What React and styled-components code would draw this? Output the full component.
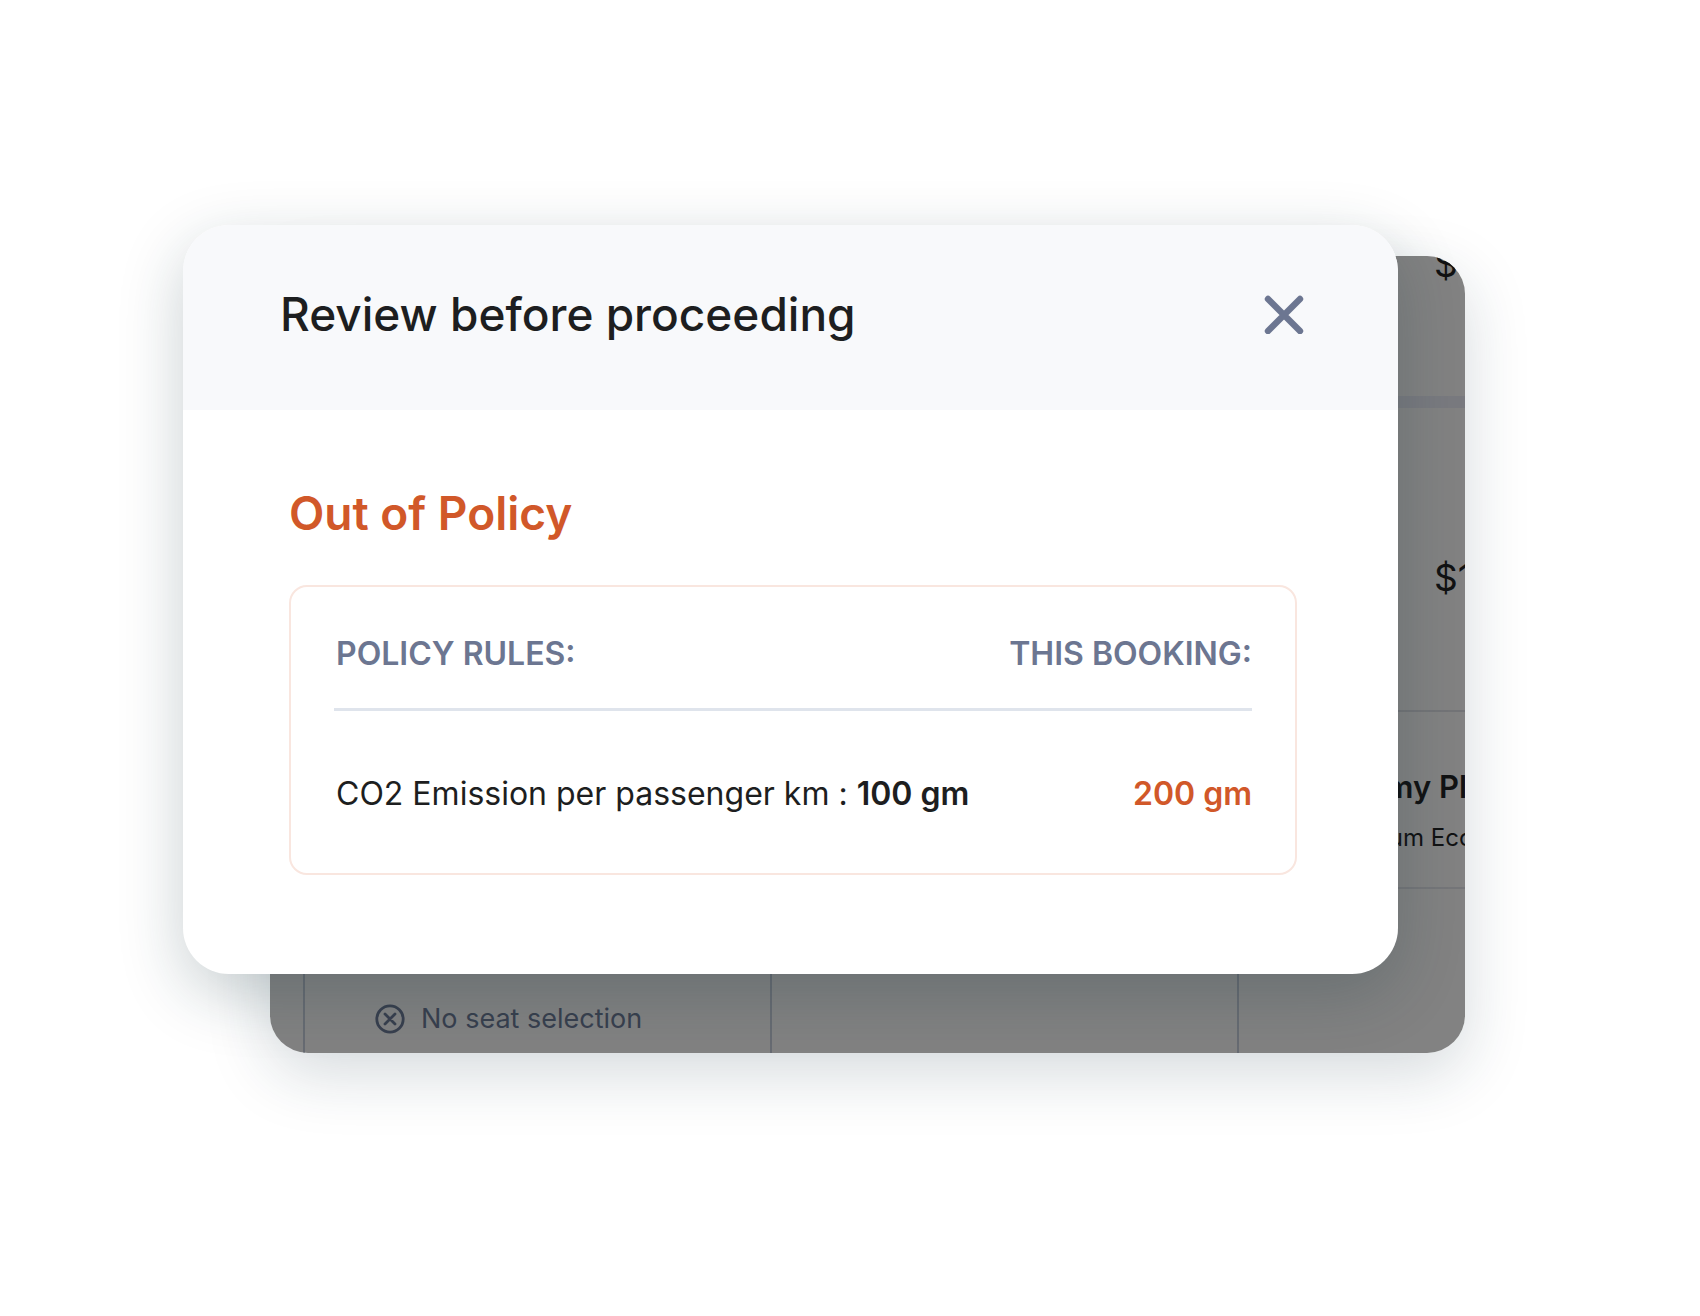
import styled, { createGlobalStyle } from 'styled-components';

const GlobalStyle = createGlobalStyle`
  * {
    box-sizing: border-box;
  }

  body {
    margin: 0;
    background-color: #FFFFFF;
    font-family: 'Inter', sans-serif;
    color: #1D1E20;
  }
`;

const Page = styled.main`
  min-height: 100vh;
  padding: 225px 235px 263px 183px;
  display: grid;
  align-items: start;
`;

const Layer = styled.div`
  display: grid;
  isolation: isolate;
`;

/* Both layers share one grid cell, the margins shift them apart */
const FarePage = styled.section`
  grid-area: 1 / 1;
  margin: 31px 0 0 87px;
  min-width: 0;
  display: flex;
  flex-direction: column;
  overflow: hidden;
  border-radius: 38px;
  background-color: #828282;
  color: #111213;
  box-shadow: 0 20px 64px rgba(20, 50, 65, 0.18);
`;

const FareColumns = styled.div`
  display: grid;
  grid-template-columns: 33px 467px 467px 467px;
  flex: ${({ $grow }) => ($grow ? 1 : 'none')};
`;

const FareList = styled.div`
  margin-top: -163px;
`;

const FareRow = styled(FareColumns)`
  height: 303px;
  align-items: center;

  & + & {
    height: 314px;
    border-top: 12px solid #797A7F;
  }
`;

const FarePrice = styled.span`
  grid-column: 4;
  padding: 38px 0 0 197px;
  font-size: 37px;
  line-height: 40px;
`;

const PlanHeader = styled(FareColumns)`
  border-top: 2px solid #737477;
  border-bottom: 2px solid #757679;
  padding: 53px 0 31px;
`;

const PlanName = styled.h3`
  grid-column: 4;
  margin: 0;
  padding-left: 55px;
  font-size: 31px;
  line-height: 44px;
  font-weight: 600;
`;

const PlanCabin = styled.p`
  grid-column: 4;
  margin: 11px 0 0;
  padding-left: 87px;
  font-size: 24px;
  line-height: 36px;
`;

const PlanCell = styled.div`
  border-left: 2px solid #676B72;
  padding: 110px 0 0 70px;
`;

const Feature = styled.div`
  display: flex;
  align-items: center;
  gap: 16px;
  font-size: 27px;
  line-height: 40px;
  color: #383F4E;
`;

const Modal = styled.div`
  grid-area: 1 / 1;
  z-index: 1;
  align-self: start;
  margin: 0 67px 79px 0;
  overflow: hidden;
  border-radius: 46px;
  background-color: #FFFFFF;
  box-shadow: 0 20px 64px rgba(20, 50, 60, 0.23);
`;

const ModalHeader = styled.header`
  display: flex;
  align-items: center;
  justify-content: space-between;
  padding: 61px 94px 68px 97px;
  background-color: #F8F9FB;
`;

const ModalTitle = styled.h1`
  margin: 0;
  font-size: 46px;
  line-height: 56px;
  font-weight: 500;
`;

const CloseButton = styled.button`
  display: flex;
  padding: 0;
  border: none;
  background: none;
  color: #6C7691;
  cursor: pointer;
`;

const ModalBody = styled.div`
  padding: 75px 101px 99px 106px;
`;

const PolicyTitle = styled.h2`
  margin: 0 0 44px;
  font-size: 46px;
  line-height: 56px;
  font-weight: 600;
  color: #D15829;
`;

const PolicyBox = styled.div`
  padding: 0 43px;
  border: 2px solid #F9E6DF;
  border-radius: 18px;
`;

const PolicyTable = styled.table`
  width: 100%;
  border-collapse: separate;
  border-spacing: 0;
  font-size: 32px;
  line-height: 40px;
`;

const HeadCell = styled.th`
  padding: 47px 0 34px;
  border-bottom: 3px solid #DFE4EC;
  font-weight: 600;
  color: #6C7691;
  text-align: ${({ $align }) => $align || 'left'};

  &:first-child {
    padding-left: 2px;
  }
`;

const Cell = styled.td`
  padding: 63px 0 59px;
  text-align: ${({ $align }) => $align || 'left'};

  &:first-child {
    padding-left: 2px;
  }
`;

const Limit = styled.strong`
  font-weight: 600;
`;

const Actual = styled.strong`
  font-weight: 600;
  color: #D15829;
`;

const CloseIcon = () => (
  <svg width="40" height="40" viewBox="0 0 40 40" fill="none" aria-hidden="true">
    <path
      d="M4 5L36 37M36 5L4 37"
      stroke="currentColor"
      strokeWidth="6.4"
      strokeLinecap="round"
    />
  </svg>
);

const NotIncludedIcon = () => (
  <svg width="30" height="30" viewBox="0 0 30 30" fill="none" aria-hidden="true">
    <circle cx="15" cy="15" r="13.2" stroke="currentColor" strokeWidth="2.8" />
    <path
      d="M10 10L20 20M20 10L10 20"
      stroke="currentColor"
      strokeWidth="2.8"
      strokeLinecap="round"
    />
  </svg>
);

const rules = [
  { name: 'CO2 Emission per passenger km', limit: '100 gm', actual: '200 gm' },
];

const ReviewModal = ({ title, items }) => {
  return (
    <Modal role="dialog" aria-labelledby="review-title">
      <ModalHeader>
        <ModalTitle id="review-title">{title}</ModalTitle>
        <CloseButton type="button" aria-label="Close">
          <CloseIcon />
        </CloseButton>
      </ModalHeader>
      <ModalBody>
        <PolicyTitle>Out of Policy</PolicyTitle>
        <PolicyBox>
          <PolicyTable>
            <thead>
              <tr>
                <HeadCell scope="col">POLICY RULES:</HeadCell>
                <HeadCell scope="col" $align="right">THIS BOOKING:</HeadCell>
              </tr>
            </thead>
            <tbody>
              {items.map((item) => (
                <tr key={item.name}>
                  <Cell>
                    {item.name} : <Limit>{item.limit}</Limit>
                  </Cell>
                  <Cell $align="right">
                    <Actual>{item.actual}</Actual>
                  </Cell>
                </tr>
              ))}
            </tbody>
          </PolicyTable>
        </PolicyBox>
      </ModalBody>
    </Modal>
  );
};

const App = () => {
  return (
    <>
      <GlobalStyle />
      <Page>
        <Layer>
          <FarePage>
            <FareList>
              <FareRow>
                <FarePrice>$1</FarePrice>
              </FareRow>
              <FareRow>
                <FarePrice>$1</FarePrice>
              </FareRow>
            </FareList>
            <PlanHeader>
              <PlanName>Economy Plus</PlanName>
              <PlanCabin>Premium Economy</PlanCabin>
            </PlanHeader>
            <FareColumns $grow>
              <span />
              <PlanCell>
                <Feature>
                  <NotIncludedIcon />
                  No seat selection
                </Feature>
              </PlanCell>
              <PlanCell />
              <PlanCell />
            </FareColumns>
          </FarePage>
          <ReviewModal title="Review before proceeding" items={rules} />
        </Layer>
      </Page>
    </>
  );
};

export default App;
